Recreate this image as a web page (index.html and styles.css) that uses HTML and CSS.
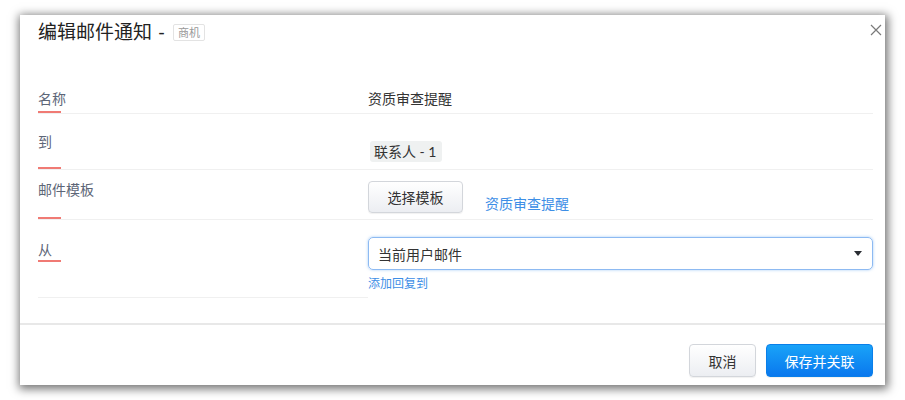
FILE: index.html
```html
<!DOCTYPE html>
<html lang="zh">
<head>
<meta charset="utf-8">
<link rel="stylesheet" href="styles.css">
</head>
<body>
<div class="page">
  <div class="dialog">
    <div class="header">
      <div class="title">编辑邮件通知 <span class="dash">-</span> <span class="tag">商机</span></div>
      <svg class="close" width="12" height="12" viewBox="0 0 12 12"><path d="M1 1L11 11M11 1L1 11" stroke="#7a7a7a" stroke-width="1.2" fill="none"/></svg>
    </div>
    <div class="form">
      <div class="row r1">
        <div class="lbl">名称</div>
        <div class="val">资质审查提醒</div>
      </div>
      <div class="row r2">
        <div class="lbl">到</div>
        <div class="val"><span class="chip">联系人 - 1</span></div>
      </div>
      <div class="row r3">
        <div class="lbl">邮件模板</div>
        <div class="val"><button class="btn">选择模板</button><a class="link">资质审查提醒</a></div>
      </div>
      <div class="row r4">
        <div class="lblcell"><div class="lbl">从</div></div>
        <div class="val">
          <div class="select"><span>当前用户邮件</span><span class="caret"></span></div>
          <a class="link small">添加回复到</a>
        </div>
      </div>
    </div>
    <div class="footer">
      <button class="btn cancel">取消</button>
      <button class="btn primary">保存并关联</button>
    </div>
  </div>
</div>
</body>
</html>
```
FILE: styles.css
```css
html, body { margin: 0; padding: 0; background: #fff; }
body { font-family: Lato, "Noto Sans CJK SC", sans-serif; color: #333; }
.page { padding: 15px 20px; }
.dialog {
  width: 865px; height: 370px; background: #fff;
  box-shadow: 1px 2px 9px 2px rgba(0,0,0,0.55);
  display: flex; flex-direction: column;
}
.header {
  height: 70px; box-sizing: border-box; padding: 4px 3px 0 18px;
  display: flex; justify-content: space-between; align-items: flex-start;
}
.title { font-size: 19px; line-height: 26px; color: #222; display: flex; align-items: center; }
.dash { margin: 0 8px 0 6px; }
.tag {
  font-size: 11px; line-height: 15px; color: #999; border: 1px solid #e3e3e3;
  border-radius: 2px; padding: 0 4px; margin-top: 1px;
}
.close { margin-top: 5px; }
.form { padding: 0 12px 0 18px; height: 238px; }
.row { display: grid; grid-template-columns: 330px 1fr; border-bottom: 1px solid #f0f0f0; }
.lbl {
  font-size: 14px; line-height: 20px; color: #5d6677; box-sizing: border-box;
  background: linear-gradient(#f07a74, #f07a74) no-repeat left bottom / 23px 2px;
}
.r1 .lbl { height: 28px; padding-top: 4px; }
.r1 .val { padding-top: 4px; font-size: 14px; line-height: 20px; color: #333; }
.r2 .lbl { height: 55px; padding-top: 18px; }
.r2 .val { padding-top: 27px; }
.chip {
  display: inline-block; background: #eff1f1; font-size: 14px; line-height: 21px;
  padding: 0 5px 0 4px; border-radius: 3px; color: #333; margin-left: 2px;
}
.r3 .lbl { height: 49px; padding-top: 10px; }
.r3 .val { display: flex; align-items: flex-start; padding-top: 11px; }
.btn {
  font-family: Lato, "Noto Sans CJK SC", sans-serif; font-size: 14px; color: #333;
  height: 32px; box-sizing: border-box; padding: 0 18px; border: 1px solid #d3d6db;
  border-radius: 4px; background: linear-gradient(#ffffff, #eceef2); cursor: pointer;
  box-shadow: 0 1px 1px rgba(0,0,0,0.06);
}
.r3 .btn { width: 95px; height: 32px; padding: 0; }
.link { color: #3d8ee6; font-size: 14px; line-height: 20px; }
.r3 .link { margin-left: 22px; margin-top: 13px; }
.r4 { border-bottom: none; }
.lblcell { border-bottom: 1px solid #f0f0f0; height: 78px; box-sizing: border-box; padding-top: 20px; }
.r4 .lbl { height: 22px; }
.r4 .val { padding-top: 17px; display: flex; flex-direction: column; align-items: flex-start; }
.select {
  width: 505px; height: 33px; box-sizing: border-box; border: 1px solid #8dbaf2;
  border-radius: 5px; box-shadow: 0 0 3px rgba(90,160,240,0.55);
  display: flex; justify-content: space-between; align-items: center;
  padding: 0 10px 0 9px; font-size: 14px; color: #333;
}
.caret { width: 0; height: 0; border-left: 4px solid transparent; border-right: 4px solid transparent; border-top: 5px solid #2a2d33; }
.small { font-size: 12px; line-height: 16px; margin-top: 6px; }
.footer {
  flex: 1; border-top: 2px solid #e8e8e8; display: flex; justify-content: flex-end;
  align-items: flex-start; gap: 10px; padding: 19px 12px 0 0;
}
.cancel { width: 67px; padding: 0; height: 33px; }
.primary {
  width: 107px; padding: 0; height: 33px; color: #fff; border: 1px solid #0a7fe9;
  background: linear-gradient(#19a3f8, #0a78ee);
}
```
